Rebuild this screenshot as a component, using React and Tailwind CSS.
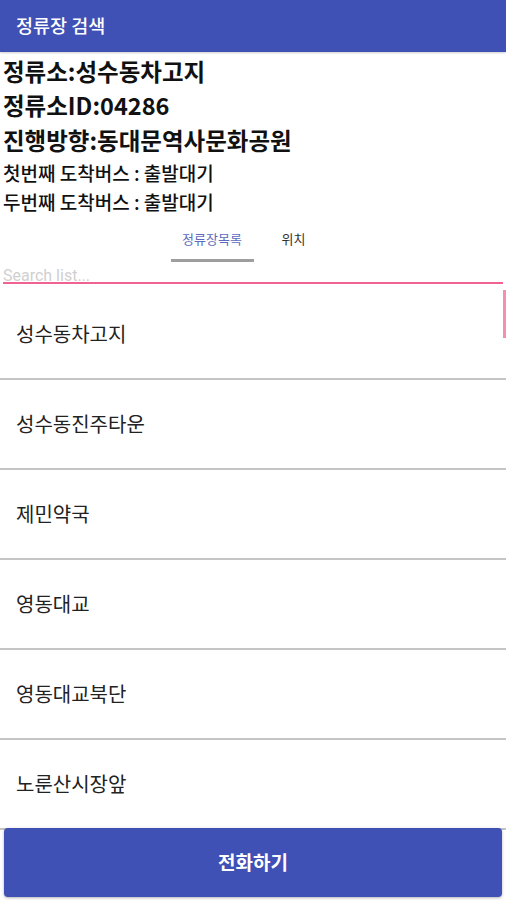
const STOPS = ['성수동차고지', '성수동진주타운', '제민약국', '영동대교', '영동대교북단', '노룬산시장앞'];

export default function App() {
  return (
    <div className="relative flex h-[900px] w-[506px] flex-col overflow-hidden bg-white font-['Noto_Sans_CJK_KR',Roboto,sans-serif]">
      {/* Toolbar */}
      <div className="flex h-[52px] shrink-0 items-center bg-[#3f51b5] pl-4 shadow-[0_1px_2px_rgba(0,0,0,0.2)]">
        <span className="text-[18.5px] font-medium text-white">정류장 검색</span>
      </div>

      {/* Stop info */}
      <div className="flex flex-col pl-[3px] text-[#111]">
        <div className="mt-[2px] h-[34px] text-[23.5px] font-bold leading-[34px]">정류소:성수동차고지</div>
        <div className="h-[35px] text-[23.5px] font-bold leading-[35px]">정류소ID:04286</div>
        <div className="h-[34px] text-[23.5px] font-bold leading-[34px]">진행방향:동대문역사문화공원</div>
        <div className="h-[32px] text-[19px] font-medium leading-[32px]">첫번째 도착버스 : 출발대기</div>
        <div className="h-[26px] text-[19px] font-medium leading-[26px]">두번째 도착버스 : 출발대기</div>
      </div>

      {/* Tabs */}
      <div className="flex h-[47px] shrink-0 justify-center pr-[2px]">
        <div className="flex w-[83px] flex-col items-center justify-between">
          <span className="mt-[15px] text-[13px] leading-[18px] text-[#5c6bc0]">정류장목록</span>
          <div className="h-[3px] w-full bg-[#9e9e9e]" />
        </div>
        <div className="flex w-[80px] justify-center">
          <span className="mt-[15px] text-[13px] leading-[18px] text-[#333]">위치</span>
        </div>
      </div>

      {/* Search */}
      <div className="mx-[3px] flex h-[22px] items-end border-b-2 border-[#f06292]">
        <span className="-mb-[3px] font-['Roboto',sans-serif] text-[16px] leading-[19px] text-[#d0d0d0]">Search list...</span>
      </div>

      {/* List */}
      <div className="relative mt-[6px] flex-1 overflow-hidden">
        <div className="absolute right-0 top-0 h-[48px] w-[3px] bg-[#f48fb1]" />
        {STOPS.map((s) => (
          <div key={s} className="flex h-[90px] items-center border-b-2 border-[#c4c4c4] pl-4">
            <span className="text-[20px] text-[#222]">{s}</span>
          </div>
        ))}
      </div>

      {/* Call button */}
      <div className="absolute bottom-[3px] left-[4px] right-[4px] flex h-[69px] items-center justify-center rounded-[4px] bg-[#3f51b5] shadow-[0_1px_3px_rgba(0,0,0,0.3)]">
        <span className="text-[19px] font-bold text-white">전화하기</span>
      </div>
    </div>
  );
}
